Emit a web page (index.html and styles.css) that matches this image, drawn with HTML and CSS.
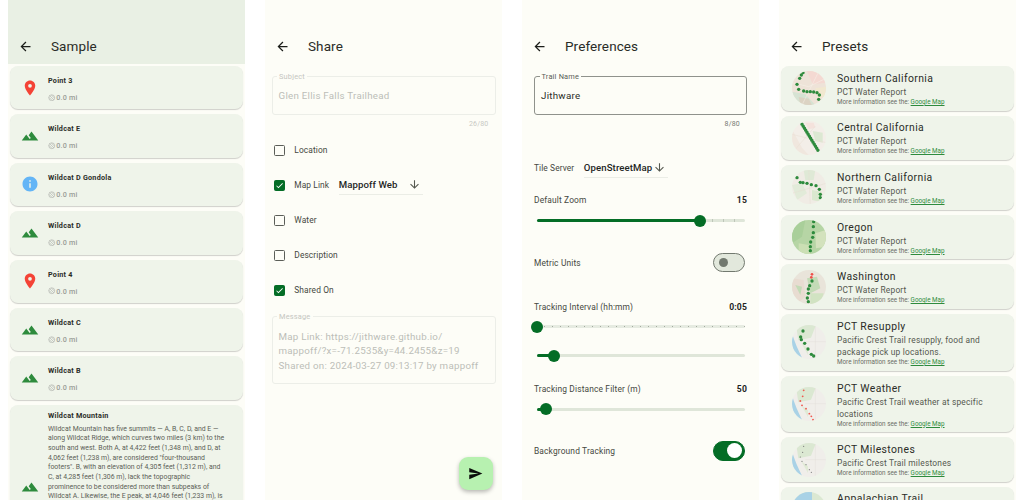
FILE: index.html
```html
<!DOCTYPE html>
<html lang="en">
<head>
<meta charset="utf-8">
<title>Mappoff screens</title>
<link rel="stylesheet" href="styles.css">
</head>
<body>
<svg class="defs" aria-hidden="true">
  <symbol id="back" viewBox="0 0 24 24"><path d="M20 11H7.83l5.59-5.59L12 4l-8 8 8 8 1.41-1.41L7.83 13H20v-2z"/></symbol>
  <symbol id="pin" viewBox="0 0 24 24"><path fill-rule="evenodd" d="M12 2C8.13 2 5 5.13 5 9c0 5.25 7 13 7 13s7-7.75 7-13c0-3.87-3.13-7-7-7zm0 9.5a2.5 2.5 0 010-5 2.5 2.5 0 010 5z"/></symbol>
  <symbol id="terrain" viewBox="0 0 24 24"><path d="M14 6l-3.75 5 2.85 3.8-1.6 1.2C9.81 13.75 7 10 7 10l-6 8h22L14 6z"/></symbol>
  <symbol id="info" viewBox="0 0 24 24"><path d="M12 2C6.48 2 2 6.48 2 12s4.48 10 10 10 10-4.48 10-10S17.52 2 12 2zm1 15h-2v-6h2v6zm0-8h-2V7h2v2z"/></symbol>
  <symbol id="down" viewBox="0 0 24 24"><path d="M20 12l-1.41-1.41L13 16.17V4h-2v12.17l-5.58-5.59L4 12l8 8 8-8z"/></symbol>
  <symbol id="send" viewBox="0 0 24 24"><path d="M2.01 21L23 12 2.01 3 2 10l15 2-15 2z"/></symbol>
  <symbol id="check" viewBox="0 0 24 24"><path d="M9 16.2L4.8 12l-1.4 1.4L9 19 21 7l-1.4-1.4z"/></symbol>
  <symbol id="nav" viewBox="0 0 24 24"><g fill="none" stroke="currentColor" stroke-width="1.7"><circle cx="12" cy="12" r="9.5"/><path d="M5.5 5.5l13 13M11 3.5l9.5 9.5M3.5 11l9.5 9.5"/></g></symbol>
</svg>

<main class="screens">
  <section class="phone">
    <header class="bar bar-tinted"><svg class="back"><use href="#back"/></svg><h1>Sample</h1></header>
    <div class="points">
      <article class="point"><svg class="pt-icon red"><use href="#pin"/></svg><div><h2>Point 3</h2><p class="dist"><svg><use href="#nav"/></svg>0.0 mi</p></div></article>
      <article class="point"><svg class="pt-icon green"><use href="#terrain"/></svg><div><h2>Wildcat E</h2><p class="dist"><svg><use href="#nav"/></svg>0.0 mi</p></div></article>
      <article class="point"><svg class="pt-icon blue"><use href="#info"/></svg><div><h2>Wildcat D Gondola</h2><p class="dist"><svg><use href="#nav"/></svg>0.0 mi</p></div></article>
      <article class="point"><svg class="pt-icon green"><use href="#terrain"/></svg><div><h2>Wildcat D</h2><p class="dist"><svg><use href="#nav"/></svg>0.0 mi</p></div></article>
      <article class="point"><svg class="pt-icon red"><use href="#pin"/></svg><div><h2>Point 4</h2><p class="dist"><svg><use href="#nav"/></svg>0.0 mi</p></div></article>
      <article class="point"><svg class="pt-icon green"><use href="#terrain"/></svg><div><h2>Wildcat C</h2><p class="dist"><svg><use href="#nav"/></svg>0.0 mi</p></div></article>
      <article class="point"><svg class="pt-icon green"><use href="#terrain"/></svg><div><h2>Wildcat B</h2><p class="dist"><svg><use href="#nav"/></svg>0.0 mi</p></div></article>
      <article class="point point-long"><svg class="pt-icon green"><use href="#terrain"/></svg><div><h2>Wildcat Mountain</h2><p class="desc">Wildcat Mountain has five summits — A, B, C, D, and E —<br>along Wildcat Ridge, which curves two miles (3 km) to the<br>south and west. Both A, at 4,422 feet (1,348 m), and D, at<br>4,062 feet (1,238 m), are considered "four-thousand<br>footers". B, with an elevation of 4,305 feet (1,312 m), and<br>C, at 4,285 feet (1,306 m), lack the topographic<br>prominence to be considered more than subpeaks of<br>Wildcat A. Likewise, the E peak, at 4,046 feet (1,233 m), is</p></div></article>
    </div>
  </section>

  <section class="phone">
    <header class="bar"><svg class="back"><use href="#back"/></svg><h1>Share</h1></header>
    <div class="share">
      <div class="field muted field-single"><span class="legend">Subject</span><span>Glen Ellis Falls Trailhead</span></div>
      <div class="counter muted-text">26/80</div>
      <div class="checks">
        <div class="check-row"><span class="box"></span>Location</div>
        <div class="check-row"><span class="box on"><svg><use href="#check"/></svg></span>Map Link<span class="select select-share">Mappoff Web<svg><use href="#down"/></svg></span></div>
        <div class="check-row"><span class="box"></span>Water</div>
        <div class="check-row"><span class="box"></span>Description</div>
        <div class="check-row"><span class="box on"><svg><use href="#check"/></svg></span>Shared On</div>
      </div>
      <div class="field muted field-multi"><span class="legend">Message</span><span>Map Link: https://jithware.github.io/<br>mappoff/?x=-71.2535&amp;y=44.2455&amp;z=19<br>Shared on: 2024-03-27 09:13:17 by mappoff</span></div>
    </div>
    <button class="fab" type="button" aria-label="Send"><svg><use href="#send"/></svg></button>
  </section>

  <section class="phone">
    <header class="bar"><svg class="back"><use href="#back"/></svg><h1>Preferences</h1></header>
    <div class="prefs">
      <div class="field field-single field-active"><span class="legend">Trail Name</span><span>Jithware</span></div>
      <div class="counter">8/80</div>
      <div class="tile-row">Tile Server<span class="select select-tile">OpenStreetMap<svg><use href="#down"/></svg></span></div>
      <div class="pref-row pref-zoom"><span>Default Zoom</span><b>15</b></div>
      <div class="slider ticks slider-zoom"><span class="fill" style="width:78.6%"></span><span class="thumb" style="left:78.6%"></span></div>
      <div class="pref-row pref-metric"><span>Metric Units</span><span class="switch"><span class="knob"></span></span></div>
      <div class="pref-row pref-interval"><span>Tracking Interval (hh:mm)</span><b>0:05</b></div>
      <div class="slider ticks-fine slider-interval"><span class="fill" style="width:0%"></span><span class="thumb" style="left:0%"></span></div>
      <div class="slider slider-second"><span class="fill" style="width:8.2%"></span><span class="thumb" style="left:8.2%"></span></div>
      <div class="pref-row pref-distance"><span>Tracking Distance Filter (m)</span><b>50</b></div>
      <div class="slider slider-distance"><span class="fill" style="width:4.8%"></span><span class="thumb" style="left:4.8%"></span></div>
      <div class="pref-row pref-bg"><span>Background Tracking</span><span class="switch switch-on"><span class="knob"></span></span></div>
    </div>
  </section>

  <section class="phone">
    <header class="bar"><svg class="back"><use href="#back"/></svg><h1>Presets</h1></header>
    <div class="presets">
      <article class="preset">
        <svg class="thumb-map" viewBox="0 0 102 102"><rect width="102" height="102" fill="#eee3d8"/><path d="M45 0h57v35l-40 5z" fill="#f4d9d2"/><path d="M0 62l40 8 30 32H0z" fill="#d6e3d3"/><path d="M20 78l30 5 10 19H25z" fill="#dcd3c3"/><path d="M70 52l32-5v30l-25 5z" fill="#f1e8cf"/><path d="M0 35l50 12 52-25M30 102l25-50 30-60" stroke="#f7f3ea" stroke-width="1.5" fill="none"/><g fill="#2e8b3d"><circle cx="33" cy="5" r="5"/><circle cx="28" cy="12" r="5"/><circle cx="23" cy="22" r="5"/><circle cx="15" cy="40" r="5"/><circle cx="20" cy="55" r="5"/><circle cx="35" cy="60" r="5"/><circle cx="45" cy="62" r="5"/><circle cx="55" cy="62" r="5"/><circle cx="65" cy="63" r="5"/><circle cx="75" cy="65" r="5"/><circle cx="82" cy="72" r="5"/><circle cx="80" cy="85" r="5"/></g></svg>
        <div class="preset-text"><h2>Southern California</h2><p class="sub">PCT Water Report</p><p class="more">More information see the: <a href="#">Google Map</a></p></div>
      </article>
      <article class="preset">
        <svg class="thumb-map" viewBox="0 0 102 102"><rect width="102" height="102" fill="#f3eee8"/><path d="M0 25l30 55 20 22H0z" fill="#f0e7de"/><path d="M62 30l30 5 0 30-22-5z" fill="#dce8d2"/><path d="M40 5h25l5 15-20 5z" fill="#f4e2dc"/><path d="M0 40l102 25M10 85l60-70" stroke="#e8dfd3" stroke-width="1.5" fill="none"/><path d="M30 10l48 78" stroke="#2e8b3d" stroke-width="10.5" stroke-linecap="round" stroke-dasharray="0 7" fill="none"/></svg>
        <div class="preset-text"><h2>Central California</h2><p class="sub">PCT Water Report</p><p class="more">More information see the: <a href="#">Google Map</a></p></div>
      </article>
      <article class="preset">
        <svg class="thumb-map" viewBox="0 0 102 102"><rect width="102" height="102" fill="#f0ece5"/><path d="M35 0h35l-5 30-25 0z" fill="#dfe9d6"/><path d="M0 45l30-5 15 30-30 20z" fill="#e2ebd9"/><path d="M60 60l30 5-5 30-25-5z" fill="#dae8cf"/><path d="M0 70l102-30M50 0l5 102" stroke="#e6dfd2" stroke-width="1.5" fill="none"/><g fill="#2e8b3d"><circle cx="15" cy="23" r="5"/><circle cx="25" cy="37" r="5"/><circle cx="33" cy="38" r="5"/><circle cx="45" cy="40" r="5"/><circle cx="58" cy="44" r="5"/><circle cx="72" cy="47" r="5"/><circle cx="82" cy="58" r="5"/><circle cx="85" cy="73" r="5"/><circle cx="85" cy="83" r="5"/></g></svg>
        <div class="preset-text"><h2>Northern California</h2><p class="sub">PCT Water Report</p><p class="more">More information see the: <a href="#">Google Map</a></p></div>
      </article>
      <article class="preset">
        <svg class="thumb-map" viewBox="0 0 102 102"><rect width="102" height="102" fill="#b6d5a5"/><path d="M0 0h40l-10 50L0 70z" fill="#a9cf9a"/><path d="M70 40l32-10v50l-30 5z" fill="#d3e2bd"/><path d="M20 70l30 5 5 27H20z" fill="#cbdfb4"/><g fill="#2e8b3d"><circle cx="65" cy="5" r="5"/><circle cx="64" cy="20" r="5"/><circle cx="64" cy="38" r="5"/><circle cx="62" cy="52" r="5"/><circle cx="56" cy="66" r="5"/><circle cx="55" cy="80" r="5"/><circle cx="55" cy="92" r="5"/></g></svg>
        <div class="preset-text"><h2>Oregon</h2><p class="sub">PCT Water Report</p><p class="more">More information see the: <a href="#">Google Map</a></p></div>
      </article>
      <article class="preset">
        <svg class="thumb-map" viewBox="0 0 102 102"><rect width="102" height="102" fill="#e9e4da"/><path d="M0 25l35 5 5 50-25 22H0z" fill="#e8dcd1"/><path d="M45 25l30-5 10 35-30 15z" fill="#c3dbb6"/><path d="M55 70l40 0-10 32H55z" fill="#d1e3c2"/><path d="M10 45l20 5-5 25z" fill="#c3dbb6"/><g fill="#ef4f4a"><circle cx="60" cy="13" r="4"/><circle cx="58" cy="22" r="4"/></g><g fill="#2e8b3d"><circle cx="60" cy="33" r="5"/><circle cx="53" cy="47" r="5"/><circle cx="49" cy="57" r="5"/><circle cx="49" cy="70" r="5"/><circle cx="46" cy="84" r="5"/><circle cx="49" cy="95" r="5"/></g></svg>
        <div class="preset-text"><h2>Washington</h2><p class="sub">PCT Water Report</p><p class="more">More information see the: <a href="#">Google Map</a></p></div>
      </article>
      <article class="preset preset-tall">
        <svg class="thumb-map" viewBox="0 0 102 102"><rect width="102" height="102" fill="#f0eeea"/><path d="M0 25Q10 60 32 102H0z" fill="#a9d2e6"/><path d="M12 0h60l-15 38-38 8z" fill="#dbe8d2"/><path d="M28 55l20 15 0 20z" fill="#e0ead5"/><path d="M70 0v102M40 50h62" stroke="#e2dfd8" stroke-width="1.2" fill="none"/><g fill="#2e8b3d"><circle cx="33" cy="18" r="5"/><circle cx="26" cy="36" r="5"/><circle cx="28" cy="44" r="5"/><circle cx="38" cy="55" r="5"/><circle cx="48" cy="72" r="5"/><circle cx="58" cy="88" r="5"/><circle cx="65" cy="93" r="5"/></g></svg>
        <div class="preset-text"><h2>PCT Resupply</h2><p class="sub">Pacific Crest Trail resupply, food and<br>package pick up locations.</p><p class="more">More information see the: <a href="#">Google Map</a></p></div>
      </article>
      <article class="preset preset-tall">
        <svg class="thumb-map" viewBox="0 0 102 102"><rect width="102" height="102" fill="#f0eeea"/><path d="M0 25Q10 60 32 102H0z" fill="#a9d2e6"/><path d="M12 0h60l-15 38-38 8z" fill="#dbe8d2"/><path d="M28 55l20 15 0 20z" fill="#e0ead5"/><path d="M70 0v102M40 50h62" stroke="#e2dfd8" stroke-width="1.2" fill="none"/><g fill="#ef5a50"><circle cx="35" cy="10" r="2.8"/><circle cx="32" cy="28" r="2.8"/><circle cx="25" cy="42" r="2.8"/><circle cx="30" cy="55" r="2.8"/><circle cx="42" cy="65" r="2.8"/><circle cx="52" cy="80" r="2.8"/><circle cx="58" cy="88" r="2.8"/><circle cx="63" cy="98" r="2.8"/></g></svg>
        <div class="preset-text"><h2>PCT Weather</h2><p class="sub">Pacific Crest Trail weather at specific<br>locations</p><p class="more">More information see the: <a href="#">Google Map</a></p></div>
      </article>
      <article class="preset">
        <svg class="thumb-map" viewBox="0 0 102 102"><rect width="102" height="102" fill="#f0eeea"/><path d="M0 25Q10 60 32 102H0z" fill="#a9d2e6"/><path d="M12 0h60l-15 38-38 8z" fill="#dbe8d2"/><path d="M28 55l20 15 0 20z" fill="#e0ead5"/><path d="M70 0v102M40 50h62" stroke="#e2dfd8" stroke-width="1.2" fill="none"/><g fill="#777"><circle cx="35" cy="10" r="1.8"/><circle cx="32" cy="28" r="1.8"/><circle cx="25" cy="42" r="1.8"/><circle cx="30" cy="55" r="1.8"/><circle cx="42" cy="65" r="1.8"/><circle cx="52" cy="80" r="1.8"/><circle cx="58" cy="88" r="1.8"/></g></svg>
        <div class="preset-text"><h2>PCT Milestones</h2><p class="sub">Pacific Crest Trail milestones</p><p class="more">More information see the: <a href="#">Google Map</a></p></div>
      </article>
      <article class="preset preset-last">
        <svg class="thumb-map" viewBox="0 0 102 102"><rect width="102" height="102" fill="#dbe8d2"/><path d="M0 0h60v25H0z" fill="#a9d2e6"/></svg>
        <div class="preset-text"><h2>Appalachian Trail</h2></div>
      </article>
    </div>
  </section>
</main>
</body>
</html>
```

FILE: styles.css
```css
* { box-sizing: border-box; }
html, body { margin: 0; height: 500px; overflow: hidden; background: #fff; }
body { font-family: Roboto, "Noto Sans", sans-serif; color: #1f211d; }
h1, h2, p { margin: 0; font-weight: inherit; }
.defs { display: none; }

.screens { display: flex; gap: 20px; padding: 0 8px; height: 500px; }
.phone { position: relative; flex: 0 0 237px; height: 500px; overflow: hidden; background: #fdfdf7; }

.bar { height: 64px; display: flex; align-items: center; padding: 36px 0 8px 9.5px; }
.bar-tinted { background: #e9f0e4; }
.back { width: 15px; height: 15px; fill: #1c1e1a; flex: none; }
.bar h1 { margin-left: 18.5px; font-size: 13.5px; letter-spacing: .1px; color: #2a2c27; }

/* Sample list */
.points { display: flex; flex-direction: column; gap: 5px; padding: 2px 2px 0; }
.point { display: flex; align-items: center; min-height: 43.4px; background: #eff4ea; border-radius: 8px; box-shadow: 0 1px 1px rgba(0,0,0,.18); padding: 0 0 0 11px; }
.point > div { margin-left: 9px; align-self: flex-start; padding-top: 10px; }
.point h2 { font-size: 7.2px; line-height: 9px; font-weight: 700; letter-spacing: .25px; color: #2a2c27; }
.pt-icon { width: 18px; height: 18px; flex: none; }
.red { fill: #f44336; }
.green { fill: #2e8b3d; }
.blue { fill: #64b5f6; }
.dist { display: flex; align-items: center; margin-top: 8px; font-size: 7.2px; line-height: 9px; font-weight: 500; color: #9a9c97; letter-spacing: .2px; }
.dist svg { width: 7.5px; height: 7.5px; margin-right: .8px; color: #a5a7a2; }
.point-long { min-height: 164px; }
.point-long > div { padding-top: 6px; }
.desc { margin-top: 5px; font-size: 6.9px; line-height: 9.67px; color: #5c5f57; white-space: nowrap; }

/* Fields */
.share { padding: 12px 6.5px 0; }
.prefs { padding: 12px 12px 0; }
.field { position: relative; border: 1px solid #8f928c; border-radius: 3px; font-size: 9.75px; letter-spacing: .25px; color: #2a2c27; padding: 0 6px; }
.field-single { height: 38.5px; display: flex; align-items: center; }
.field-multi { height: 67.5px; padding-top: 12.5px; line-height: 14.5px; white-space: nowrap; margin-top: 14.5px; }
.legend { position: absolute; top: -4.5px; left: 4.5px; padding: 0 2px; background: #fdfdf7; font-size: 7.4px; line-height: 8px; color: #5a5d57; letter-spacing: .2px; }
.muted { border-color: #eceee8; color: #bcbdb8; }
.muted .legend { color: #c5c6c1; }
.counter { height: 20px; padding: 5px 7px 0 0; text-align: right; font-size: 7px; line-height: 9px; color: #777a74; letter-spacing: .2px; }
.muted-text { color: #c8c9c4; }

/* Checks */
.checks { display: flex; flex-direction: column; gap: 12px; padding: 4px 0 0 2.8px; }
.check-row { display: flex; align-items: center; height: 23px; font-size: 8.4px; color: #45483f; letter-spacing: .1px; }
.box { width: 11px; height: 11px; margin-right: 9px; border: 1.4px solid #5b5e58; border-radius: 1.5px; flex: none; display: flex; }
.box.on { background: #046d26; border-color: #046d26; }
.box svg { width: 100%; height: 100%; fill: #fff; }
.select { display: inline-flex; align-items: center; justify-content: space-between; height: 20px; border-bottom: 1px solid #ebede6; font-size: 9.6px; font-weight: 500; color: #23251f; letter-spacing: .1px; }
.select svg { width: 13px; height: 13px; fill: #55584f; flex: none; }
.select-share { width: 84px; margin: 0 0 0 9.5px; padding-right: 1.5px; }
.select-tile { width: 84px; margin-left: 9.5px; padding-right: 1.5px; }

.fab { position: absolute; right: 9.5px; bottom: 10px; width: 33.5px; height: 33.5px; padding: 0; border: 0; border-radius: 9px; background: #b7f1b0; box-shadow: 0 2px 4px rgba(0,0,0,.28); display: flex; align-items: center; justify-content: center; }
.fab svg { width: 15px; height: 15px; fill: #0b0d0a; }

/* Preferences */
.tile-row { display: flex; align-items: center; margin-top: 23.5px; font-size: 8.4px; color: #45483f; letter-spacing: .1px; }
.pref-row { display: flex; justify-content: space-between; align-items: center; font-size: 8.4px; color: #45483f; letter-spacing: .15px; }
.pref-row b { font-size: 8.6px; color: #23251f; }
.pref-zoom { height: 10px; margin-top: 17px; }
.pref-metric { height: 20px; margin-top: 30.5px; }
.pref-interval { height: 10px; margin-top: 29.2px; }
.pref-distance { height: 10px; margin-top: 26.5px; }
.pref-bg { height: 20px; margin-top: 30px; }

.slider { position: relative; height: 3px; margin: 0 2.5px; border-radius: 2px; background: #dfe6d9; }
.fill { position: absolute; left: 0; top: 0; height: 100%; border-radius: 2px; background: #046d26; }
.thumb { position: absolute; top: 50%; width: 12px; height: 12px; margin: -6px 0 0 -6px; border-radius: 50%; background: #046d26; }
.ticks { background-image: repeating-linear-gradient(90deg, transparent 0 10px, rgba(150,158,146,.45) 10px 11px); }
.ticks-fine { background-image: repeating-linear-gradient(90deg, transparent 0 7px, #a4aa9f 7px 8px); background-size: 100% 1px; background-repeat: no-repeat; background-position: 0 50%; background-color: #e6ebe1; }
.slider-zoom { margin-top: 14px; }
.slider-interval { margin-top: 13.8px; }
.slider-second { margin-top: 26px; }
.slider-distance { margin-top: 14px; }

.switch { position: relative; width: 31.5px; height: 19.5px; margin-right: 2.5px; border-radius: 10px; background: #e2e8dc; border: 1.3px solid #72796f; flex: none; }
.knob { position: absolute; left: 4.5px; top: 50%; width: 9.5px; height: 9.5px; margin-top: -4.75px; border-radius: 50%; background: #72796f; }
.switch-on { background: #046d26; border-color: #046d26; }
.switch-on .knob { left: auto; right: 2px; width: 15px; height: 15px; margin-top: -7.5px; background: #fff; }

/* Presets */
.presets { display: flex; flex-direction: column; gap: 5px; padding: 2px 2px 0; }
.preset { display: flex; align-items: center; min-height: 44.6px; padding-left: 11px; background: #eff4ea; border-radius: 8px; box-shadow: 0 1px 1px rgba(0,0,0,.18); flex: none; }
.preset-tall { min-height: 56.7px; }
.preset-last { align-items: flex-start; padding-top: 5px; }
.thumb-map { width: 34px; height: 34px; border-radius: 50%; flex: none; }
.preset-text { margin-left: 11px; padding-top: 2px; white-space: nowrap; }
.preset-last .preset-text { padding-top: 0; }
.preset-text h2 { font-size: 10.4px; line-height: 13px; letter-spacing: .4px; color: #2a2c27; }
.sub { margin-top: 1px; font-size: 8.4px; line-height: 12px; letter-spacing: .2px; color: #55584f; }
.more { font-size: 6.3px; line-height: 9px; color: #6a6d66; }
.more a { color: #2e8b3d; }
```
